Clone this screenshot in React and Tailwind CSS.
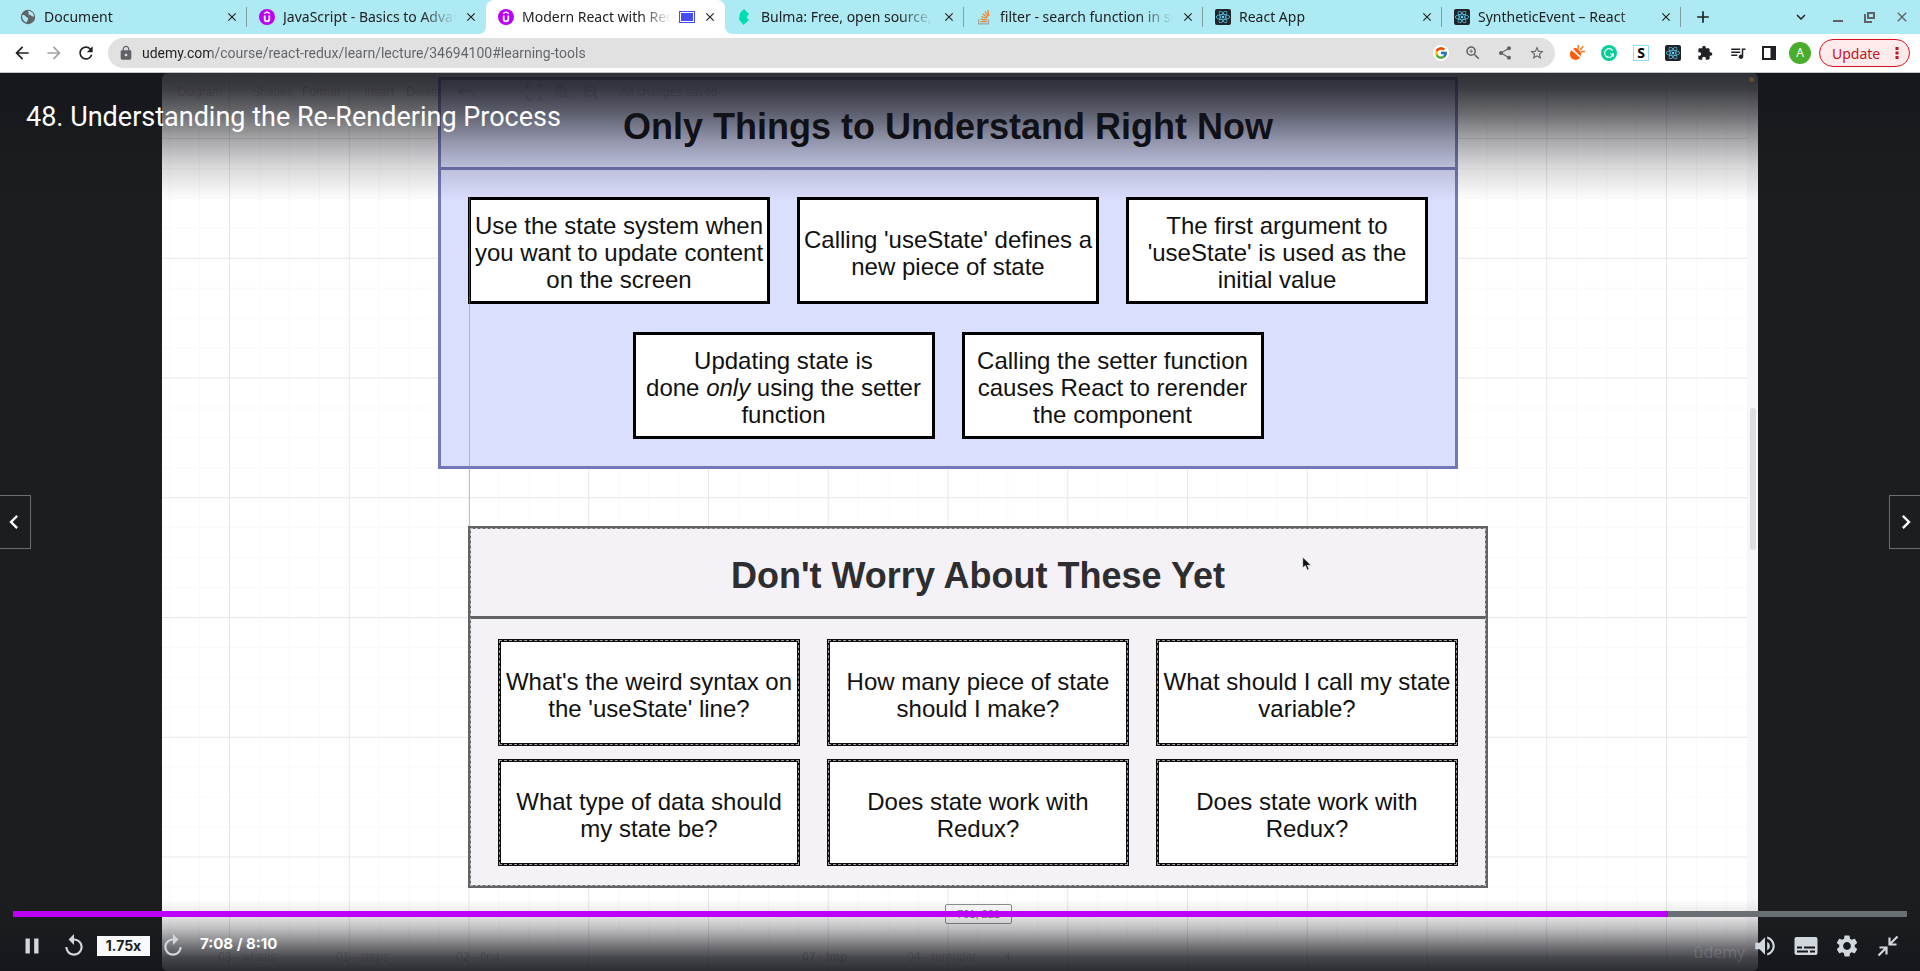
import React from "react";
import {
  MdArrowBack,
  MdArrowForward,
  MdRefresh,
  MdLock,
  MdShare,
  MdStarBorder,
  MdZoomIn,
  MdExtension,
  MdQueueMusic,
  MdPause,
  MdReplay,
  MdVolumeUp,
  MdSettings,
  MdChevronLeft,
  MdChevronRight,
  MdExpandMore,
  MdAdd,
  MdClose,
} from "react-icons/md";
import { FcGoogle } from "react-icons/fc";
import { FaReact } from "react-icons/fa";

function GlobeIcon() {
  return (
    <svg viewBox="0 0 16 16" className="size-4 shrink-0">
      <circle cx="8" cy="8" r="7.2" fill="#5f6368" />
      <path d="M2.2 6.2c1.6-.6 3 .2 3.6 1.4.5 1 1.8.7 2.3 1.7.5 1-.6 1.6-.8 2.6-.1.9-.8 1.700-1.500 1.400C3.300 12 1.700 9.200 2.200 6.200z" fill="#aeeaf3" />
      <path d="M8 2.200c1.200-.4 3.200.2 4.300 1.400.9 1 1.500 2.300 1.600 3.600-.9.800-2.300.2-2.900-.7-.5-.8-1.700-.3-2.400-1C7.900 4.700 9.200 4.200 8.700 3.400 8.500 3 7.600 2.700 8 2.200z" fill="#aeeaf3" />
    </svg>
  );
}

function UdemyIcon() {
  return (
    <svg viewBox="0 0 16 16" className="size-4 shrink-0">
      <circle cx="8" cy="8" r="8" fill="#bc00f8" />
      <path d="M5 4.600 8 2.900l3 1.700" fill="none" stroke="#fff" strokeWidth="1.300" />
      <path d="M5.700 6.400v3.700a2.300 2.300 0 0 0 4.600 0V6.400" fill="none" stroke="#fff" strokeWidth="1.800" />
    </svg>
  );
}

function BulmaIcon() {
  return (
    <svg viewBox="0 0 16 16" className="size-4 shrink-0">
      <path d="M2 10.500 3 4l4-4 5 5-2.600 3.200L12 11l-5.500 5z" fill="#00ddb3" />
    </svg>
  );
}

function StackIcon() {
  return (
    <svg viewBox="0 0 16 16" className="size-4 shrink-0" fill="none">
      <path d="M2.600 10.200v4.700h9.800v-4.700" stroke="#9ba5a8" strokeWidth="1.300" />
      <path d="M4.400 12.700h6.200M4.600 10.200l6.100.9M5.200 7.500l5.700 2M6.600 4.800l4.900 3.600M8.900 2.600l3.500 4.800M11.700 1l1.300 5.800" stroke="#f48024" strokeWidth="1.200" />
    </svg>
  );
}

function ReactIcon() {
  return (
    <span className="flex size-4 shrink-0 items-center justify-center rounded-xs bg-[#20232a]">
      <FaReact className="size-3.5 text-[#61dafb]" />
    </span>
  );
}

const tabs = [
  { title: "Document", icon: <GlobeIcon />, divider: true },
  { title: "JavaScript - Basics to Advanced", icon: <UdemyIcon /> },
  { title: "Modern React with Redux", icon: <UdemyIcon />, active: true },
  { title: "Bulma: Free, open source, and", icon: <BulmaIcon />, divider: true },
  { title: "filter - search function in sql", icon: <StackIcon />, divider: true },
  { title: "React App", icon: <ReactIcon />, divider: true },
  { title: "SyntheticEvent – React", icon: <ReactIcon />, divider: true },
];

function Tab({ title, icon, active, divider }) {
  return (
    <div
      className={
        active
          ? "relative flex h-full max-w-[239px] min-w-0 flex-1 items-center gap-2 rounded-t-lg bg-white pr-2 pl-3"
          : "relative flex h-full max-w-[239px] min-w-0 flex-1 items-center gap-2 pr-2 pl-3"
      }
    >
      {active && (
        <>
          <span className="absolute bottom-0 -left-2 size-2 bg-[radial-gradient(circle_at_0_0,#aeeaf3_8px,#fff_8px)]" />
          <span className="absolute -right-2 bottom-0 size-2 bg-[radial-gradient(circle_at_100%_0,#aeeaf3_8px,#fff_8px)]" />
        </>
      )}
      {icon}
      <button
        type="button"
        className="min-w-0 flex-1 overflow-hidden mask-r-from-80% text-left text-[14px] leading-5 whitespace-nowrap text-[#202124]"
      >
        {title}
      </button>
      {active && (
        <span className="h-3 w-4 shrink-0 border border-[#474cf0] bg-[#474cf0] shadow-[inset_0_0_0_1px_#fff]" />
      )}
      <button type="button" aria-label={"Close " + title} className="shrink-0">
        <MdClose className="size-3.5 text-[#202124]" />
      </button>
      {divider && <span className="absolute top-[7px] right-0 h-5 w-px bg-[#7f9da3]" />}
    </div>
  );
}

function TabStrip() {
  return (
    <div className="flex h-[34px] items-center bg-[#aeeaf3] pl-2">
      <div className="flex h-full min-w-0 flex-1 items-center">
        {tabs.map((t) => (
          <Tab key={t.title} {...t} />
        ))}
        <button type="button" aria-label="New tab" className="ml-3 shrink-0">
          <MdAdd className="size-5 text-[#202124]" />
        </button>
      </div>
      <div className="flex shrink-0 items-center gap-4 pr-2.5">
        <button type="button" aria-label="Search tabs" className="mr-1">
          <MdExpandMore className="size-[18px] text-[#202124]" />
        </button>
        <button type="button" aria-label="Minimise">
          <svg viewBox="0 0 16 16" className="size-4" fill="#5f6368">
            <path d="M3 11h10v2H3z" />
          </svg>
        </button>
        <button type="button" aria-label="Restore">
          <svg viewBox="0 0 16 16" className="size-4" fill="none" stroke="#5f6368" strokeWidth="2">
            <path d="M6 4h6v5H6zM3 5v8h7" />
          </svg>
        </button>
        <button type="button" aria-label="Close window">
          <MdClose className="size-4 text-[#5f6368]" />
        </button>
      </div>
    </div>
  );
}

function Toolbar() {
  return (
    <div className="flex h-[39px] items-center border-b border-[#c4c4c6] bg-white pr-2.5">
      <nav className="flex w-[108px] shrink-0 items-center gap-3 pl-3 text-[#202124]">
        <button type="button" aria-label="Back"><MdArrowBack className="size-5" /></button>
        <button type="button" aria-label="Forward"><MdArrowForward className="size-5 text-[#a3a3a5]" /></button>
        <button type="button" aria-label="Reload"><MdRefresh className="size-5" /></button>
      </nav>
      <div className="flex h-[30px] min-w-0 flex-1 items-center gap-4 rounded-full bg-[#e1e1e1] pr-2.5 pl-2.5 text-[#5f6368]">
        <MdLock className="-mr-2 size-4 shrink-0" />
        <input
          type="text"
          aria-label="Address"
          defaultValue="udemy.com/course/react-redux/learn/lecture/34694100#learning-tools"
          className="min-w-0 flex-1 bg-[linear-gradient(90deg,#202124_69px,#5f6368_69px)] bg-clip-text font-['Roboto',sans-serif] text-[14px] leading-5 text-transparent outline-none"
        />
        <span className="flex size-4 shrink-0 items-center justify-center rounded-full bg-white"><FcGoogle className="size-3.5" /></span>
        <button type="button" aria-label="Zoom" className="-mx-px"><MdZoomIn className="size-[18px]" /></button>
        <button type="button" aria-label="Share"><MdShare className="size-4" /></button>
        <button type="button" aria-label="Bookmark"><MdStarBorder className="size-4" /></button>
      </div>
      <div className="flex shrink-0 items-center gap-4 pl-3.5">
        <svg viewBox="0 0 16 16" className="size-4">
          <path d="M2.400 5.200 11 12.800c-2 2.500-5.600 2.800-8 1C.6 11.900.3 7.800 2.400 5.200z" fill="#ff5a0a" />
          <path d="M4 3.800c1.600-1 3.400-.9 4.700.3l2.400 2.500c1 1.300 1.100 3 .4 4.600z" fill="#ff5a0a" />
          <path d="M9.300 3.400V.6M11.300 4.700l2.500-3M12.300 7l3.300-.6" stroke="#ff7a2a" strokeWidth="1.600" strokeLinecap="round" />
        </svg>
        <svg viewBox="0 0 16 16" className="size-4" fill="none">
          <circle cx="8" cy="8" r="8" fill="#06ce9a" />
          <path d="M11.700 5.600A4.400 4.400 0 1 0 12.300 9H9.200" stroke="#fff" strokeWidth="1.200" />
          <path d="m10.500 10.800 1.700-1.800.3 2.600" stroke="#fff" />
        </svg>
        <span className="flex size-4 items-center justify-center border border-[#8fdcf5] bg-white text-[14px] leading-4 font-bold text-black">S</span>
        <ReactIcon />
        <MdExtension className="size-4 text-[#202124]" />
        <MdQueueMusic className="-mr-0.5 size-[18px] text-[#202124]" />
        <svg viewBox="0 0 16 16" className="size-4">
          <path d="M1 1h14v14H1z" fill="#202124" />
          <path d="M3 3h6.500v10H3z" fill="#fff" />
        </svg>
        <button type="button" className="-mx-1 flex size-[22px] items-center justify-center rounded-full bg-[#4aae2c] text-[12px] text-white">A</button>
        <button type="button" className="-ml-1 flex h-7 w-[91px] items-center justify-between rounded-full border border-[#d3131f] bg-[#fdebec] pr-2.5 pl-3 text-[14px] text-[#c5111d]">
          Update
          <svg viewBox="0 0 4 14" className="h-3.5 w-1" fill="#c5111d">
            <path d="M.5 1h3v3h-3zM.5 5.500h3v3h-3zM.5 10h3v3h-3z" />
          </svg>
        </button>
      </div>
    </div>
  );
}

function Card({ children, dashed }) {
  return (
    <div
      className={
        dashed
          ? "flex h-[107px] w-[302px] items-center justify-center border-3 border-[#0c0c0c] bg-white pt-1 text-center text-[24px] leading-[27px] whitespace-nowrap text-[#111] outline-1 -outline-offset-2 outline-[#9a9a9a] outline-dashed"
          : "flex h-[107px] w-[302px] items-center justify-center border-3 border-black bg-white pt-1 text-center text-[24px] leading-[27px] whitespace-nowrap text-[#111]"
      }
    >
      <p>{children}</p>
    </div>
  );
}

function Diagram() {
  return (
    <div className="relative h-full w-full overflow-hidden rounded-md bg-white font-['Liberation_Sans',sans-serif]">
      <svg className="absolute inset-0 h-full w-full">
        <defs>
          <pattern id="grid" x="67" y="65" width="119.75" height="119.75" patternUnits="userSpaceOnUse">
            <path d="M30.400 0v120M60.400 0v120M90.400 0v120M0 30.400h120M0 60.400h120M0 90.400h120" stroke="#faf8fb" />
            <path d="M.5 0v120M0 .5h120" stroke="#e6e6ea" />
          </pattern>
        </defs>
        <rect width="100%" height="100%" fill="url(#grid)" />
      </svg>
      <div className="absolute inset-y-0 right-0 w-[11px] bg-[#f8f6fa]">
        <div className="mx-auto mt-[335px] h-[142px] w-1.5 rounded-full bg-[#dfdde1]" />
      </div>

      <section className="absolute top-1 left-[276px] w-[1020px] border-3 border-[#7379b8] bg-[#dbdffe]">
        <h2 className="flex h-[90px] items-center justify-center border-b-3 border-[#7379b8] pt-1.5 text-[36px] font-bold text-[#0b0b10]">
          Only Things to Understand Right Now
        </h2>
        <div className="flex flex-wrap justify-center gap-x-[27px] gap-y-7 pt-[27px] pb-[27px]">
          <Card>Use the state system when<br />you want to update content<br />on the screen</Card>
          <Card>Calling 'useState' defines a<br />new piece of state</Card>
          <Card>The first argument to<br />'useState' is used as the<br />initial value</Card>
          <Card>Updating state is<br />done <em>only</em> using the setter<br />function</Card>
          <Card>Calling the setter function<br />causes React to rerender<br />the component</Card>
        </div>
      </section>
      <div className="absolute top-[124px] left-[307px] h-[330px] w-px bg-[#8b8d9a]/50" />

      <section className="absolute top-[453px] left-[306px] w-[1020px] border-3 border-[#636265] bg-[#f4f2f6] outline-1 -outline-offset-3 outline-[#b5b5b8] outline-dashed">
        <h2 className="flex h-[90px] items-center justify-center border-b-3 border-[#636265] pt-1.5 text-[36px] font-bold text-[#2e2d30]">
          Don't Worry About These Yet
        </h2>
        <div className="flex flex-wrap justify-center gap-x-[27px] gap-y-[13px] pt-5 pb-[19px]">
          <Card dashed>What's the weird syntax on<br />the 'useState' line?</Card>
          <Card dashed>How many piece of state<br />should I make?</Card>
          <Card dashed>What should I call my state<br />variable?</Card>
          <Card dashed>What type of data should<br />my state be?</Card>
          <Card dashed>Does state work with<br />Redux?</Card>
          <Card dashed>Does state work with<br />Redux?</Card>
        </div>
      </section>

      <div className="absolute top-[831px] left-[783px] flex h-5 w-[67px] items-center justify-center rounded-xs border border-[#8f8f92] bg-white text-[11px] text-[#777]">
        791, 221
      </div>

      <svg viewBox="0 0 12 18" className="absolute top-[484px] left-[1140px] h-[14px] w-[9px]">
        <path d="M1 0v14l3.500-3 2.500 6 2.500-1-2.500-5.500h5z" fill="#111" stroke="#fff" strokeWidth=".7" />
      </svg>
    </div>
  );
}

/* Editor chrome that shows through the dimmed edges of the video. */
function DimmedChrome() {
  return (
    <div className="absolute inset-0 overflow-hidden font-['Liberation_Sans',sans-serif] text-[12px] leading-4 text-black/15">
      <div className="absolute top-[11px] left-[15px] flex items-center">
        <span className="w-[75px]">Diagram</span>
        <span className="w-[50px]">Shapes</span>
        <span className="w-[62px]">Format</span>
        <span className="w-[42px]">Insert</span>
        <span className="w-[52px]">Delete</span>
        <svg viewBox="0 0 18 12" className="mr-[50px] h-3 w-[18px] opacity-50" fill="none" stroke="currentColor" strokeWidth="2">
          <path d="M6 1 1 5l5 4M1 5h9c4 0 6 2 7 6" />
        </svg>
        <svg viewBox="0 0 74 16" className="mr-5 h-4 w-[74px] opacity-50" fill="none" stroke="currentColor" strokeWidth="2">
          <path d="M1 5V1h4M11 1h4v4M15 11v4h-4M5 15H1v-4" />
          <circle cx="35" cy="7" r="5" />
          <path d="m39 11 4 4M33 7h4M35 5v4" />
          <circle cx="64" cy="7" r="5" />
          <path d="m68 11 4 4M62 7h4" />
        </svg>
        <span className="whitespace-nowrap">All changes saved</span>
      </div>
      <div className="absolute bottom-[6px] left-[56px] flex items-center whitespace-nowrap">
        <span className="w-[118px]">03 - whatis</span>
        <span className="w-[120px]">01 - steps</span>
        <span className="w-[346px]">02 - first</span>
        <span className="w-[105px] font-bold">07 - imp</span>
        <span className="w-[96px]">04 - rerender</span>
        <span className="text-[18px] leading-4">+</span>
      </div>
      <svg viewBox="0 0 3 3" className="absolute top-[4px] right-1 size-[5px]">
        <circle cx="1.500" cy="1.500" r="1.500" fill="#b9791f" fillOpacity=".35" />
      </svg>
      <span className="absolute right-[13px] bottom-[9px] font-['Open_Sans',sans-serif] text-[16px] leading-5 text-white/15">ûdemy</span>
    </div>
  );
}

function Controls() {
  return (
    <div className="absolute inset-x-0 bottom-0 px-[13px] font-['Inter',sans-serif] text-[#d1d7dc]">
      <input
        type="range"
        aria-label="Progress"
        min="0"
        max="490"
        defaultValue="428"
        className="block h-1.5 w-full appearance-none bg-[linear-gradient(90deg,#bc00f8_87.4%,#6a6f73_87.4%)] [&::-webkit-slider-thumb]:size-0 [&::-webkit-slider-thumb]:appearance-none"
      />
      <div className="flex h-[54px] items-center px-1.5 pt-1">
        <button type="button" aria-label="Pause" className="mr-4"><MdPause className="size-[26px]" /></button>
        <button type="button" aria-label="Rewind" className="mr-2.5"><MdReplay className="size-[26px]" /></button>
        <button type="button" aria-label="Playback rate" className="mr-2.5 h-5 w-[53px] bg-[#f7f9fa] text-[14px] leading-4 font-bold text-[#1c1d1f]">1.75x</button>
        <button type="button" aria-label="Forward" className="mr-3.5"><MdReplay className="size-[26px] -scale-x-100" /></button>
        <span className="pb-1 text-[15px] leading-4 font-bold text-white">7:08 / 8:10</span>
        <div className="ml-auto flex items-center gap-4 pr-px">
          <button type="button" aria-label="Volume"><MdVolumeUp className="size-[26px]" /></button>
          <button type="button" aria-label="Subtitles">
            <svg viewBox="0 0 24 20" className="h-5 w-6">
              <rect x=".5" y="1" width="23" height="18" rx="2" fill="currentColor" />
              <path d="M3 11.500h5M10 11.500h11M3 15.500h11M16 15.500h5" stroke="#16171c" strokeWidth="2" />
            </svg>
          </button>
          <button type="button" aria-label="Settings"><MdSettings className="size-[26px]" /></button>
          <button type="button" aria-label="Exit expanded view">
            <svg viewBox="0 0 24 24" className="size-6" fill="none" stroke="currentColor" strokeWidth="2.200">
              <path d="M21.500 2.500 14.500 9.500M13.500 3.500v7h7M2.500 21.500l7-7M3.500 13.500h7v7" />
            </svg>
          </button>
        </div>
      </div>
    </div>
  );
}

function Player() {
  return (
    <main className="relative flex min-h-[898px] flex-1 justify-center overflow-hidden bg-[#1c1d1f]">
      <div className="relative w-[83.125%]">
        <Diagram />
      </div>
      <div className="absolute inset-x-0 top-0 h-32 bg-[linear-gradient(180deg,rgba(22,23,29,0.89)_0%,rgba(22,23,29,0.84)_12%,rgba(22,23,29,0.62)_33%,rgba(22,23,29,0.38)_52%,rgba(22,23,29,0.17)_73%,rgba(22,23,29,0)_100%)]" />
      <div className="absolute inset-x-0 bottom-0 h-18 bg-[linear-gradient(0deg,rgba(22,23,29,0.9)_0%,rgba(22,23,29,0.8)_18%,rgba(22,23,29,0.55)_38%,rgba(22,23,29,0.3)_57%,rgba(22,23,29,0.1)_77%,rgba(22,23,29,0)_100%)]" />
      <div className="absolute inset-y-0 w-[83.125%]">
        <DimmedChrome />
      </div>
      <h1 className="absolute top-6 left-[26px] font-['Roboto',sans-serif] text-[27px] leading-10 text-white">
        48. Understanding the Re-Rendering Process
      </h1>
      <a href="#previous" aria-label="Previous lecture" className="absolute top-[422px] left-0 flex h-[54px] w-[31px] items-center border border-l-0 border-[#6a6f73] bg-[#1c1d1f] text-white">
        <MdChevronLeft className="size-7" />
      </a>
      <a href="#next" aria-label="Next lecture" className="absolute top-[422px] right-0 flex h-[54px] w-[31px] items-center justify-end border border-r-0 border-[#6a6f73] bg-[#1c1d1f] text-white">
        <MdChevronRight className="size-7" />
      </a>
      <Controls />
    </main>
  );
}

export default function App() {
  return (
    <div className="flex min-h-screen flex-col font-['Noto_Sans',sans-serif]">
      <header>
        <TabStrip />
        <Toolbar />
      </header>
      <Player />
    </div>
  );
}
